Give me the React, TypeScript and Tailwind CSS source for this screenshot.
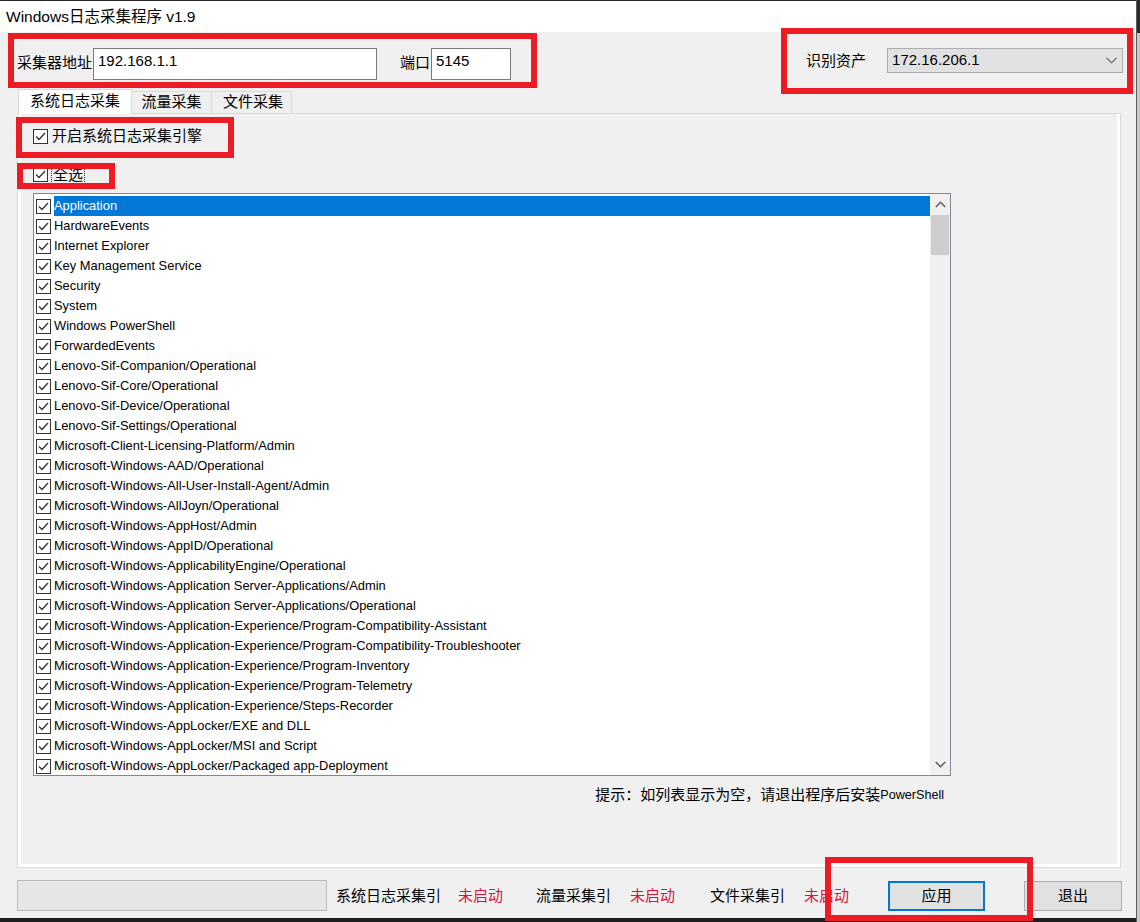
import React from "react";

const ITEMS = [
  "Application",
  "HardwareEvents",
  "Internet Explorer",
  "Key Management Service",
  "Security",
  "System",
  "Windows PowerShell",
  "ForwardedEvents",
  "Lenovo-Sif-Companion/Operational",
  "Lenovo-Sif-Core/Operational",
  "Lenovo-Sif-Device/Operational",
  "Lenovo-Sif-Settings/Operational",
  "Microsoft-Client-Licensing-Platform/Admin",
  "Microsoft-Windows-AAD/Operational",
  "Microsoft-Windows-All-User-Install-Agent/Admin",
  "Microsoft-Windows-AllJoyn/Operational",
  "Microsoft-Windows-AppHost/Admin",
  "Microsoft-Windows-AppID/Operational",
  "Microsoft-Windows-ApplicabilityEngine/Operational",
  "Microsoft-Windows-Application Server-Applications/Admin",
  "Microsoft-Windows-Application Server-Applications/Operational",
  "Microsoft-Windows-Application-Experience/Program-Compatibility-Assistant",
  "Microsoft-Windows-Application-Experience/Program-Compatibility-Troubleshooter",
  "Microsoft-Windows-Application-Experience/Program-Inventory",
  "Microsoft-Windows-Application-Experience/Program-Telemetry",
  "Microsoft-Windows-Application-Experience/Steps-Recorder",
  "Microsoft-Windows-AppLocker/EXE and DLL",
  "Microsoft-Windows-AppLocker/MSI and Script",
  "Microsoft-Windows-AppLocker/Packaged app-Deployment",
];

function Check() {
  return (
    <span className="flex h-[15px] w-[15px] shrink-0 items-center justify-center border border-[#333333] bg-white">
      <svg width="13" height="13" viewBox="0 0 13 13">
        <path d="M2 6.5 L5 9.5 L11 3" fill="none" stroke="#333333" strokeWidth="1.3" />
      </svg>
    </span>
  );
}

// red annotation frames drawn over the screenshot
function Mark({ cls }: { cls: string }) {
  return <div className={"pointer-events-none absolute border-[6px] border-[#ed1c24] " + cls} />;
}

export default function App() {
  return (
    <div className="relative flex h-[922px] w-[1140px] overflow-hidden bg-[#f0f0f0] font-['Liberation_Sans','Noto_Sans_CJK_SC',sans-serif] text-black">
      <div className="flex w-[1136px] flex-col">
        <div className="h-[1px] bg-[#2a2a2a]" />
        {/* title bar */}
        <div className="flex h-[31px] items-center bg-white pl-[6px] text-[15.5px]">Windows日志采集程序 v1.9</div>

        {/* collector address row */}
        <div className="flex h-[56px] items-start pl-[17px] pt-[16px] text-[15px]">
          <span className="leading-[30px]">采集器地址</span>
          <div className="ml-[1px] h-[32px] w-[284px] border border-[#7a7a7a] bg-white pl-[4px] pt-[3px] leading-[18px]">192.168.1.1</div>
          <span className="ml-[23px] leading-[30px]">端口</span>
          <div className="ml-[1px] h-[32px] w-[80px] border border-[#7a7a7a] bg-white pl-[4px] pt-[3px] leading-[18px]">5145</div>
          <span className="ml-[295px] leading-[26px]">识别资产</span>
          <div className="ml-[21px] flex h-[25px] w-[236px] items-center justify-between border border-[#adadad] bg-[#e1e1e1] pl-[4px] pr-[5px]">
            <span>172.16.206.1</span>
            <svg width="11" height="7" viewBox="0 0 11 7">
              <path d="M0.5 0.8 L5.5 5.8 L10.5 0.8" fill="none" stroke="#606060" strokeWidth="1.1" />
            </svg>
          </div>
        </div>

        {/* tabs */}
        <div className="flex h-[25px] items-end pl-[18px] text-[15px]">
          <div className="relative z-10 -mb-[1px] flex h-[25px] w-[114px] items-center justify-center border-x border-t border-[#d9d9d9] bg-white pb-[1px]">系统日志采集</div>
          <div className="flex h-[22px] w-[80px] items-center justify-center border-r border-t border-[#d9d9d9]">流量采集</div>
          <div className="flex h-[22px] w-[80px] items-center justify-center border-r border-t border-[#d9d9d9] pl-[3px]">文件采集</div>
        </div>

        {/* tab page */}
        <div className="ml-[17px] flex h-[755px] w-[1104px] flex-col border border-[#d9d9d9]">
          <div className="flex flex-1 flex-col border-x-[3px] border-b-[3px] border-white pl-[12px]">
            <div className="mt-[15px] flex h-[15px] items-center text-[15px]">
              <Check />
              <span className="ml-[4px]">开启系统日志采集引擎</span>
            </div>
            <div className="mt-[23px] flex h-[15px] items-center text-[15px]">
              <Check />
              <span className="ml-[3px] border border-dotted border-[#333333] px-[1px] leading-[16px]">全选</span>
            </div>

            {/* event log list */}
            <div className="mt-[11px] flex h-[583px] w-[918px] border border-[#828790] bg-white">
              <div className="flex flex-1 flex-col overflow-hidden pl-[2px] pt-[2px] text-[12.9px]">
                {ITEMS.map((it, i) => (
                  <div key={it} className="flex h-[20px] shrink-0 items-center">
                    <Check />
                    <span
                      className={
                        "ml-[3px] flex h-[20px] items-center whitespace-nowrap " +
                        (i === 0 ? "flex-1 bg-[#0078d7] text-white" : "")
                      }
                    >
                      {it}
                    </span>
                  </div>
                ))}
              </div>
              <div className="flex w-[20px] flex-col bg-[#f0f0f0]">
                <div className="flex h-[21px] items-center justify-center">
                  <svg width="11" height="7" viewBox="0 0 11 7">
                    <path d="M0.8 6 L5.5 1.3 L10.2 6" fill="none" stroke="#606060" strokeWidth="1.6" />
                  </svg>
                </div>
                <div className="mx-[1px] h-[40px] bg-[#cdcdcd]" />
                <div className="flex-1" />
                <div className="flex h-[21px] items-center justify-center">
                  <svg width="11" height="7" viewBox="0 0 11 7">
                    <path d="M0.8 1 L5.5 5.7 L10.2 1" fill="none" stroke="#606060" strokeWidth="1.6" />
                  </svg>
                </div>
              </div>
            </div>

            <div className="mt-[10px] flex w-[918px] justify-end pr-[7px] leading-[18px]">
              <span className="text-[15px]">提示：如列表显示为空，请退出程序后安装</span>
              <span className="text-[12.6px] leading-[18px]">PowerShell</span>
            </div>
          </div>
        </div>

        {/* status bar */}
        <div className="mt-[12px] flex h-[31px] items-center pl-[17px] text-[15px]">
          <div className="h-[31px] w-[310px] border border-[#bcbcbc] bg-[#e6e6e6]" />
          <span className="ml-[9px] pt-[2px]">系统日志采集引</span>
          <span className="ml-[17px] pt-[2px] text-[#dc143c]">未启动</span>
          <span className="ml-[33px] pt-[2px]">流量采集引</span>
          <span className="ml-[19px] pt-[2px] text-[#dc143c]">未启动</span>
          <span className="ml-[35px] pt-[2px]">文件采集引</span>
          <span className="ml-[19px] pt-[2px] text-[#dc143c]">未启动</span>
          <button className="ml-[39px] h-[30px] w-[97px] border-2 border-[#0078d7] bg-[#e1e1e1] pt-[1px]">应用</button>
          <button className="ml-[39px] h-[30px] w-[98px] border border-[#adadad] bg-[#e1e1e1] pt-[1px]">退出</button>
        </div>
        <div className="flex-1" />
        <div className="h-[4px] bg-[#1e1e1e]" />
      </div>
      <div className="flex w-[4px] flex-col border-l border-[#5a5a5a] bg-[#c8c8c8]">
        <div className="h-[33px] bg-[#2a2a2a]" />
      </div>

      <Mark cls="left-[8px] top-[33px] h-[55px] w-[529px]" />
      <Mark cls="left-[781px] top-[28px] h-[66px] w-[352px]" />
      <Mark cls="left-[16px] top-[117px] h-[41px] w-[218px]" />
      <Mark cls="left-[17px] top-[163px] h-[26px] w-[98px]" />
      <Mark cls="left-[825px] top-[857px] h-[64px] w-[208px]" />
    </div>
  );
}
